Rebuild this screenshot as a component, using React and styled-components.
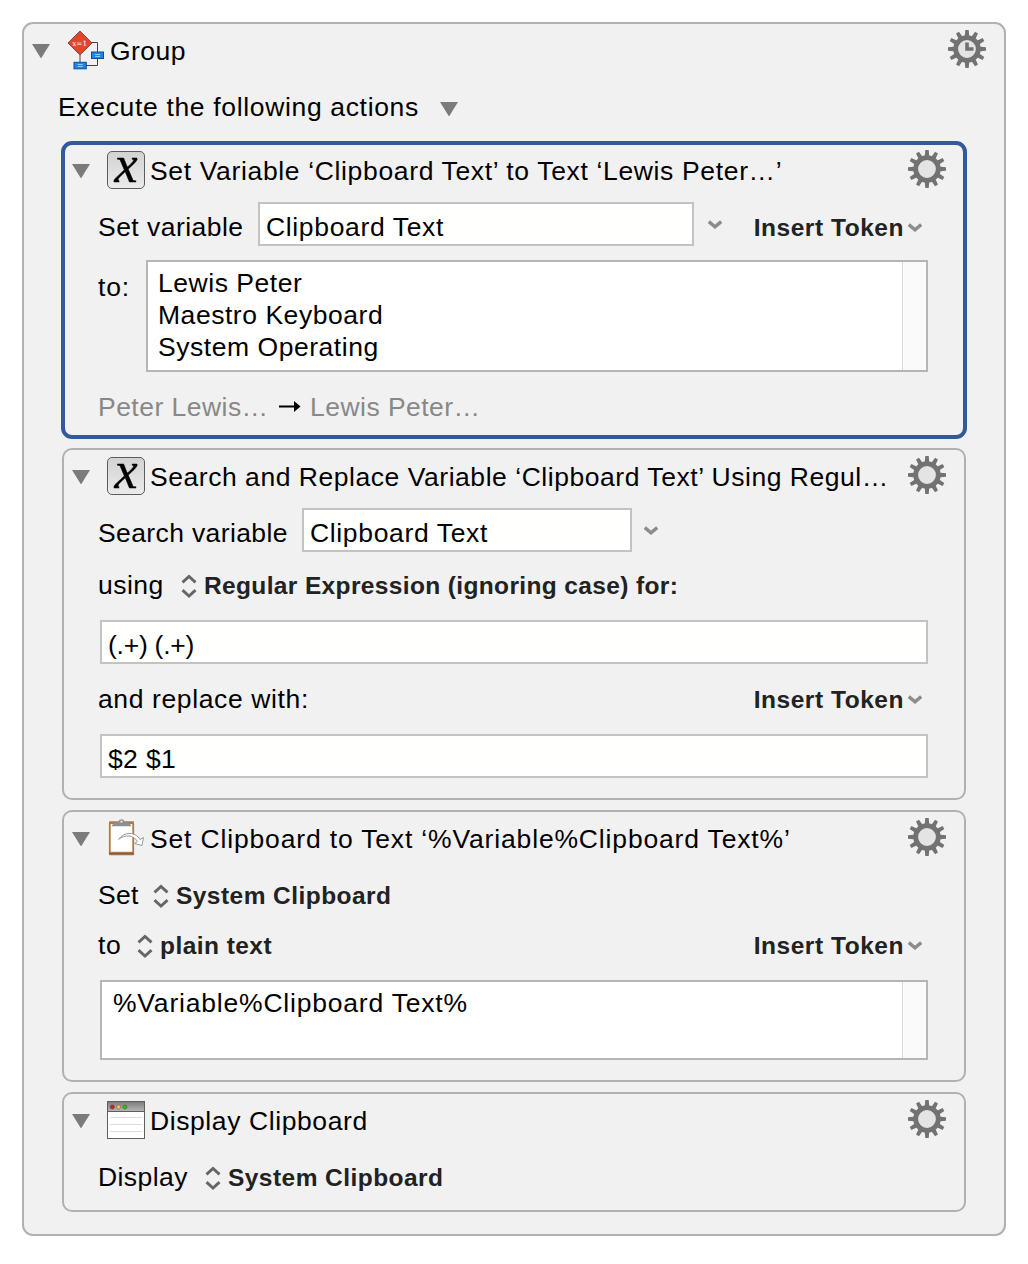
import React from 'react';
import styled, { createGlobalStyle } from 'styled-components';

const GlobalStyle = createGlobalStyle`
  *, *::before, *::after {
    box-sizing: border-box;
  }

  body {
    margin: 0;
    background: #fff;
    color: #000;
    font-family: 'Liberation Sans', Arial, sans-serif;
    font-size: 26.5px;
    line-height: 32px;
  }
`;

const StyledPage = styled.main`
  width: 1028px;
  height: 1264px;
  padding: 22px;
`;

const StyledGroup = styled.section`
  width: 984px;
  height: 1214px;
  border: 2px solid #b1b1b1;
  border-radius: 11px;
  background: #f1f1f1;
`;

const StyledActions = styled.div`
  display: flex;
  flex-direction: column;
  gap: 10px;
  padding: 2px 38px 0;
`;

const StyledHeader = styled.header`
  display: flex;
  align-items: center;
  height: 50px;
  padding: 0 18px 0 8px;

  > svg:last-child {
    margin-left: auto;
  }
`;

const StyledIconSlot = styled.span`
  display: flex;
  flex: none;
  width: 38px;
  margin: 2px 5px 0 17px;

  svg {
    overflow: visible;
  }
`;

const StyledBody = styled.div`
  padding: 0 36px ${props => props.$bottom}px 34px;
`;

// The thicker selected border grows 1px both ways, so the content stays put
const StyledCard = styled.article`
  margin: ${props => (props.$selected ? '-1px' : '0')};
  border: ${props => (props.$selected ? '4px solid #335a96' : '2px solid #b1b1b1')};
  border-radius: ${props => (props.$selected ? 11 : 10)}px;

  ${StyledHeader} {
    margin: ${props => (props.$selected ? '-1px -1px 0' : '0')};
  }

  ${StyledBody} {
    margin: ${props => (props.$selected ? '0 -1px -1px' : '0')};
  }
`;

const StyledRow = styled.div`
  display: flex;
  align-items: ${props => (props.$top ? 'flex-start' : 'center')};
  height: ${props => props.$height || 32}px;
  margin-top: ${props => props.$gap || 0}px;
  padding-left: ${props => props.$indent || 0}px;
`;

const StyledText = styled.span`
  flex: none;
  width: ${props => (props.$width ? `${props.$width}px` : 'auto')};
  padding-top: ${props => props.$drop || 0}px;
  color: ${props => (props.$muted ? '#888' : 'inherit')};
  letter-spacing: ${props => props.$track ?? 0.54}px;
  white-space: pre;
`;

const StyledBold = styled(StyledText)`
  color: #222;
  font-size: 24.5px;
  font-weight: bold;
`;

const StyledField = styled.div`
  flex: none;
  width: ${props => props.$width}px;
  height: 44px;
  padding: 7px 6px 0;
  border: 2px solid #c3c3c3;
  background: #fffffe;
  letter-spacing: ${props => props.$track ?? 0.65}px;
  white-space: pre;
`;

const StyledTextArea = styled.div`
  display: flex;
  flex: 1;
  justify-content: space-between;
  height: 100%;
  padding-left: ${props => props.$inset}px;
  border: 2px solid #b5b5b5;
  background: #fff;
`;

const StyledLines = styled.div`
  display: flex;
  flex-direction: column;
  padding-top: 5px;
`;

const StyledGutter = styled.div`
  width: 24px;
  border-left: 1px solid #d9d9d9;
  background: #fafafa;
`;

const StyledToken = styled.div`
  display: flex;
  align-items: center;
  gap: 4px;
  margin: 0 6px 0 auto;
  padding-top: ${props => props.$drop || 0}px;
`;

const StyledPopup = styled.div`
  display: flex;
  align-items: center;
  gap: 7px;
  padding-top: 2px;
`;

const StyledChevronSlot = styled.span`
  display: flex;
  margin-left: ${props => props.$left}px;
`;

const StyledTriangleSlot = styled.span`
  display: flex;
  margin-top: 4px;
`;

const Triangle = () => (
  <StyledTriangleSlot>
    <svg width="18" height="14" viewBox="0 0 18 14">
      <path d="M0 0H18L9 14.5Z" fill="#7b7b7b" />
    </svg>
  </StyledTriangleSlot>
);

const Chevron = () => (
  <svg width="14" height="9" viewBox="0 0 14 9">
    <path d="M0.8 1.6L7 6.8L13.2 1.6" fill="none" stroke="#8c8c8c" strokeWidth="3.4" />
  </svg>
);

const UpDown = () => (
  <svg width="16" height="24" viewBox="0 0 16 24">
    <path d="M1.5 8.3L8 2.5L14.5 8.3M1.5 16.2L8 22L14.5 16.2" fill="none" stroke="#666" strokeWidth="2.9" />
  </svg>
);

const TEETH = Array.from({ length: 12 }, (_, i) => i * 30);

const Gear = ({ clock }) => (
  <svg width="38" height="38" viewBox="-19 -19 38 38">
    {TEETH.map(angle => (
      <path key={angle} d="M-2.4 -11L-1.7 -19H1.7L2.4 -11Z" fill="#727272" transform={`rotate(${angle})`} />
    ))}
    <circle r="11.3" fill="#e4e4e4" stroke="#727272" strokeWidth="4.8" />
    {clock && <path d="M0 -6.5V0H6.5" fill="none" stroke="#727272" strokeWidth="3.6" />}
  </svg>
);

const VariableIcon = () => (
  <svg width="38" height="38" viewBox="0 0 38 38">
    <defs>
      <linearGradient id="variableFill" x1="0" y1="0" x2="0" y2="1">
        <stop offset="0" stopColor="#d2d2d2" />
        <stop offset="1" stopColor="#ebebeb" />
      </linearGradient>
    </defs>
    <rect x="0.5" y="0.5" width="37" height="37" rx="4.5" fill="url(#variableFill)" stroke="#5c5c5c" />
    <text
      x="19"
      y="30.5"
      textAnchor="middle"
      fontFamily="'Liberation Serif', serif"
      fontSize="52"
      fontStyle="italic"
      stroke="#000"
      strokeWidth="0.4"
    >
      x
    </text>
  </svg>
);

const GroupIcon = () => (
  <svg width="38" height="40" viewBox="0 0 38 40">
    <path d="M24 12.5H30.5V22M13 25V32M19 35.5H30.5V28" fill="none" stroke="#444" />
    <path d="M13 1L25 13L13 25L1 13Z" fill="#e2452a" stroke="#6b3529" strokeWidth="0.8" />
    <text x="12.7" y="15.7" textAnchor="middle" fontFamily="'DejaVu Serif', serif" fontSize="7.3" fill="#fff">
      x=1
    </text>
    <rect x="24.5" y="22" width="12" height="6.5" fill="#1089fb" stroke="#174a86" />
    <rect x="7" y="32.3" width="12.300" height="6.5" fill="#1089fb" stroke="#174a86" />
    <path d="M28 24.500H33M28 26.500H33M10.700 34.500H15.700M10.700 36.500H15.700" stroke="#8fcaff" />
  </svg>
);

const ClipboardIcon = () => (
  <svg width="38" height="38" viewBox="0 0 38 38">
    <rect x="1.800" y="3.500" width="25.400" height="33" rx="1.500" fill="#000" opacity="0.25" />
    <rect x="2" y="2.300" width="25" height="33.200" rx="1" fill="#b07a45" />
    <rect x="2" y="34.200" width="25" height="1.300" fill="#80552e" />
    <rect x="3.700" y="5" width="21.600" height="27.800" fill="#fff" />
    <path d="M5 7.200V6L8 3.600H11.500Q11.500 0.300 14.500 0.300T17.500 3.600H21L24 6V7.200Z" fill="#8d9092" />
    <circle cx="14.500" cy="2.600" r="1.200" fill="#e0e0e0" />
    <path
      d="M11.500 20.500C17 12.500 28.500 12.500 33 20.500L36.500 18.500L35 26.500L27.500 24.500L30.500 22.500C26.500 16 18 15 11.500 20.500Z"
      fill="#fff"
      stroke="#9a9a9a"
      strokeWidth="1"
    />
  </svg>
);

const WindowIcon = () => (
  <svg width="38" height="38" viewBox="0 0 38 38">
    <defs>
      <linearGradient id="titleBar" x1="0" y1="0" x2="0" y2="1">
        <stop offset="0" stopColor="#7d7d7d" />
        <stop offset="1" stopColor="#b4b4b4" />
      </linearGradient>
    </defs>
    <rect x="0.500" y="0.500" width="37" height="37" fill="#fff" stroke="#5e5e5e" />
    <rect x="1" y="1" width="36" height="9" fill="url(#titleBar)" />
    <path d="M1 10.500H37" stroke="#5e5e5e" />
    <circle cx="5.300" cy="6" r="2.100" fill="#c4222a" stroke="#7a3a3a" strokeWidth="0.6" />
    <circle cx="11.600" cy="6" r="2.100" fill="#f4bd55" stroke="#8c6a3a" strokeWidth="0.6" />
    <circle cx="17.900" cy="6" r="2.100" fill="#43b02a" stroke="#3a6b30" strokeWidth="0.6" />
    <path d="M3 16.500H35M3 23.500H35M3 30.500H35" stroke="#dcdcdc" />
  </svg>
);

const InsertToken = ({ drop = 1 }) => (
  <StyledToken $drop={drop}>
    <StyledBold $track={0.54}>Insert Token</StyledBold>
    <Chevron />
  </StyledToken>
);

const Popup = ({ track = 0.45, children }) => (
  <StyledPopup>
    <UpDown />
    <StyledBold $track={track}>{children}</StyledBold>
  </StyledPopup>
);

const TextArea = ({ lines, inset, track }) => (
  <StyledTextArea $inset={inset}>
    <StyledLines>
      {lines.map(line => (
        <StyledText key={line} $track={track}>{line}</StyledText>
      ))}
    </StyledLines>
    <StyledGutter />
  </StyledTextArea>
);

const Header = ({ icon, title, track, clock }) => (
  <StyledHeader>
    <Triangle />
    <StyledIconSlot>{icon}</StyledIconSlot>
    <StyledText $drop={4} $track={track}>{title}</StyledText>
    <Gear clock={clock} />
  </StyledHeader>
);

const App = () => (
  <StyledPage>
    <GlobalStyle />
    <StyledGroup>
      <Header icon={<GroupIcon />} title="Group" track={0.45} clock />
      <StyledRow $height={66} $indent={34}>
        <StyledText $width={382} $track={0.66}>Execute the following actions</StyledText>
        <Triangle />
      </StyledRow>

      <StyledActions>
        <StyledCard $selected>
          <Header icon={<VariableIcon />} title="Set Variable ‘Clipboard Text’ to Text ‘Lewis Peter…’" track={0.65} />
          <StyledBody $bottom={13}>
            <StyledRow $height={44} $gap={8}>
              <StyledText $width={160} $drop={6} $track={0.46}>Set variable</StyledText>
              <StyledField $width={436}>Clipboard Text</StyledField>
              <StyledChevronSlot $left={14}>
                <Chevron />
              </StyledChevronSlot>
              <InsertToken drop={7} />
            </StyledRow>
            <StyledRow $height={112} $gap={14} $top>
              <StyledText $width={48} $drop={11} $track={0.8}>to:</StyledText>
              <TextArea inset={10} lines={['Lewis Peter', 'Maestro Keyboard', 'System Operating']} />
            </StyledRow>
            <StyledRow $gap={19}>
              <StyledText $width={181} $track={0.47} $muted>Peter Lewis…</StyledText>
              <svg width="31" height="14" viewBox="0 0 31 14">
                <path d="M0 5.5H15V1L21.500 6.500L15 12V7.500H0Z" />
              </svg>
              <StyledText $track={0.47} $muted>Lewis Peter…</StyledText>
            </StyledRow>
          </StyledBody>
        </StyledCard>

        <StyledCard>
          <Header
            icon={<VariableIcon />}
            title="Search and Replace Variable ‘Clipboard Text’ Using Regul…"
            track={0.54}
          />
          <StyledBody $bottom={20}>
            <StyledRow $height={44} $gap={8}>
              <StyledText $width={204} $drop={6} $track={0.38}>Search variable</StyledText>
              <StyledField $width={330}>Clipboard Text</StyledField>
              <StyledChevronSlot $left={12}>
                <Chevron />
              </StyledChevronSlot>
            </StyledRow>
            <StyledRow $gap={17}>
              <StyledText $width={83} $track={0.45}>using</StyledText>
              <Popup track={0.36}>Regular Expression (ignoring case) for:</Popup>
            </StyledRow>
            <StyledRow $height={44} $gap={19} $indent={2}>
              <StyledField $width={828} $track={-0.25}>(.+) (.+)</StyledField>
            </StyledRow>
            <StyledRow $gap={19}>
              <StyledText $track={0.62}>and replace with:</StyledText>
              <InsertToken />
            </StyledRow>
            <StyledRow $height={44} $gap={19} $indent={2}>
              <StyledField $width={828} $track={0.35}>$2 $1</StyledField>
            </StyledRow>
          </StyledBody>
        </StyledCard>

        <StyledCard>
          <Header icon={<ClipboardIcon />} title="Set Clipboard to Text ‘%Variable%Clipboard Text%’" track={0.84} />
          <StyledBody $bottom={20}>
            <StyledRow $gap={17}>
              <StyledText $width={55} $track={0.3}>Set</StyledText>
              <Popup>System Clipboard</Popup>
            </StyledRow>
            <StyledRow $gap={18}>
              <StyledText $width={39} $track={0.7}>to</StyledText>
              <Popup>plain text</Popup>
              <InsertToken />
            </StyledRow>
            <StyledRow $height={80} $gap={19} $indent={2}>
              <TextArea inset={11} track={0.8} lines={['%Variable%Clipboard Text%']} />
            </StyledRow>
          </StyledBody>
        </StyledCard>

        <StyledCard>
          <Header icon={<WindowIcon />} title="Display Clipboard" track={0.59} />
          <StyledBody $bottom={17}>
            <StyledRow $gap={17}>
              <StyledText $width={107} $track={0.42}>Display</StyledText>
              <Popup>System Clipboard</Popup>
            </StyledRow>
          </StyledBody>
        </StyledCard>
      </StyledActions>
    </StyledGroup>
  </StyledPage>
);

export default App;
